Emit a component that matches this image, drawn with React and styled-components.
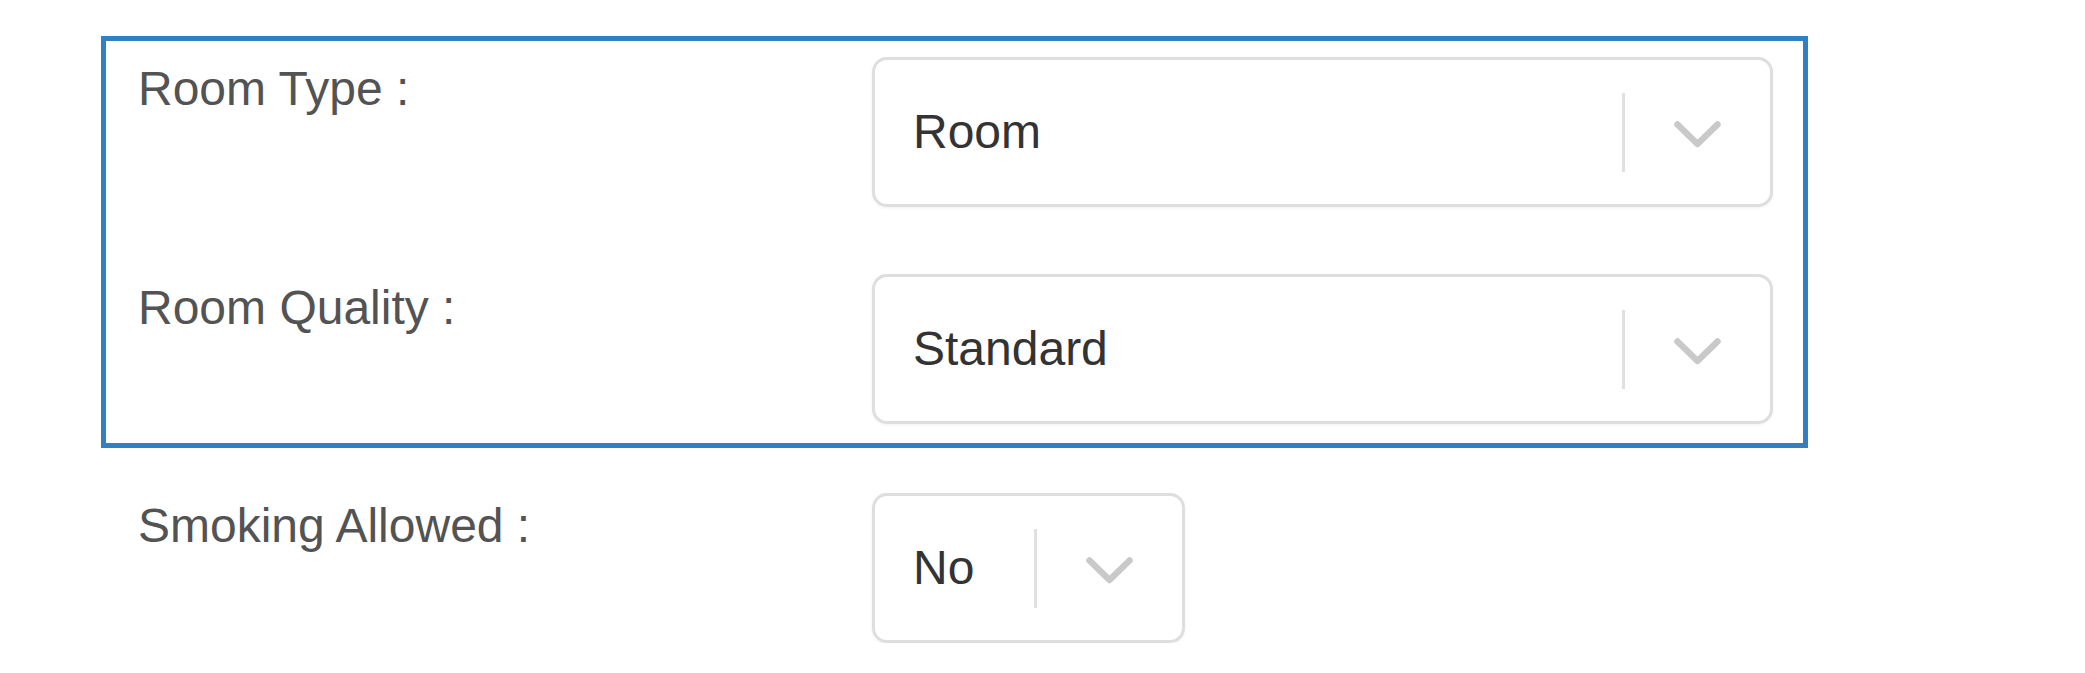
import React from "react";
import styled, { createGlobalStyle } from "styled-components";

const GlobalStyle = createGlobalStyle`
  html, body {
    margin: 0;
    padding: 0;
    background: #ffffff;
  }
  body {
    font-family: "Liberation Sans", Arial, sans-serif;
  }
`;

const Page = styled.div`
  padding: 36px 0 0 101px;
`;

const Form = styled.div`
  width: 1707px;
  display: flex;
  flex-direction: column;
`;

const Highlight = styled.div`
  border: 5px solid #3180c4;
  padding: 16px 30px 19px 32px;
  display: flex;
  flex-direction: column;
  gap: 67px;
`;

const Row = styled.div`
  display: flex;
  align-items: flex-start;
  padding-left: ${(p) => p.$indent || 0}px;
  margin-top: ${(p) => p.$top || 0}px;
`;

const Label = styled.div`
  width: 734px;
  flex: none;
  padding-top: ${(p) => p.$pt || 0}px;
  font-size: 48px;
  line-height: 54px;
  color: #535353;
`;

const Control = styled.div`
  box-sizing: border-box;
  height: 150px;
  ${(p) => (p.$width ? `width: ${p.$width}px; flex: none;` : "flex: 1;")}
  border: 3px solid #dedede;
  border-radius: 15px;
  background: #fff;
  display: flex;
  align-items: center;
  box-shadow: 0 1px 3px rgba(0, 0, 0, 0.06);
`;

const Value = styled.div`
  flex: 1;
  padding-left: 38px;
  font-size: 48px;
  line-height: 54px;
  color: #333333;
  white-space: nowrap;
`;

const Separator = styled.span`
  width: 3px;
  height: 79px;
  background: #e0e0e0;
  flex: none;
`;

const Indicator = styled.div`
  padding: 5px 48px 0 48px;
  display: flex;
  align-items: center;
  flex: none;
`;

const Chevron = () => (
  <svg width="49" height="29" viewBox="0 0 49 29" aria-hidden="true">
    <polyline
      points="4.5,4.5 24.5,24 44.5,4.5"
      fill="none"
      stroke="#c9c9c9"
      strokeWidth="6.5"
      strokeLinecap="round"
      strokeLinejoin="round"
    />
  </svg>
);

const Select = ({ value, width }) => (
  <Control $width={width}>
    <Value>{value}</Value>
    <Separator />
    <Indicator>
      <Chevron />
    </Indicator>
  </Control>
);

export default function App() {
  return (
    <>
      <GlobalStyle />
      <Page>
        <Form>
          <Highlight>
            <Row>
              <Label $pt={5}>Room Type :</Label>
              <Select value="Room" />
            </Row>
            <Row>
              <Label $pt={7}>Room Quality :</Label>
              <Select value="Standard" />
            </Row>
          </Highlight>
          <Row $indent={37} $top={45}>
            <Label $pt={6}>Smoking Allowed :</Label>
            <Select value="No" width={313} />
          </Row>
        </Form>
      </Page>
    </>
  );
}
